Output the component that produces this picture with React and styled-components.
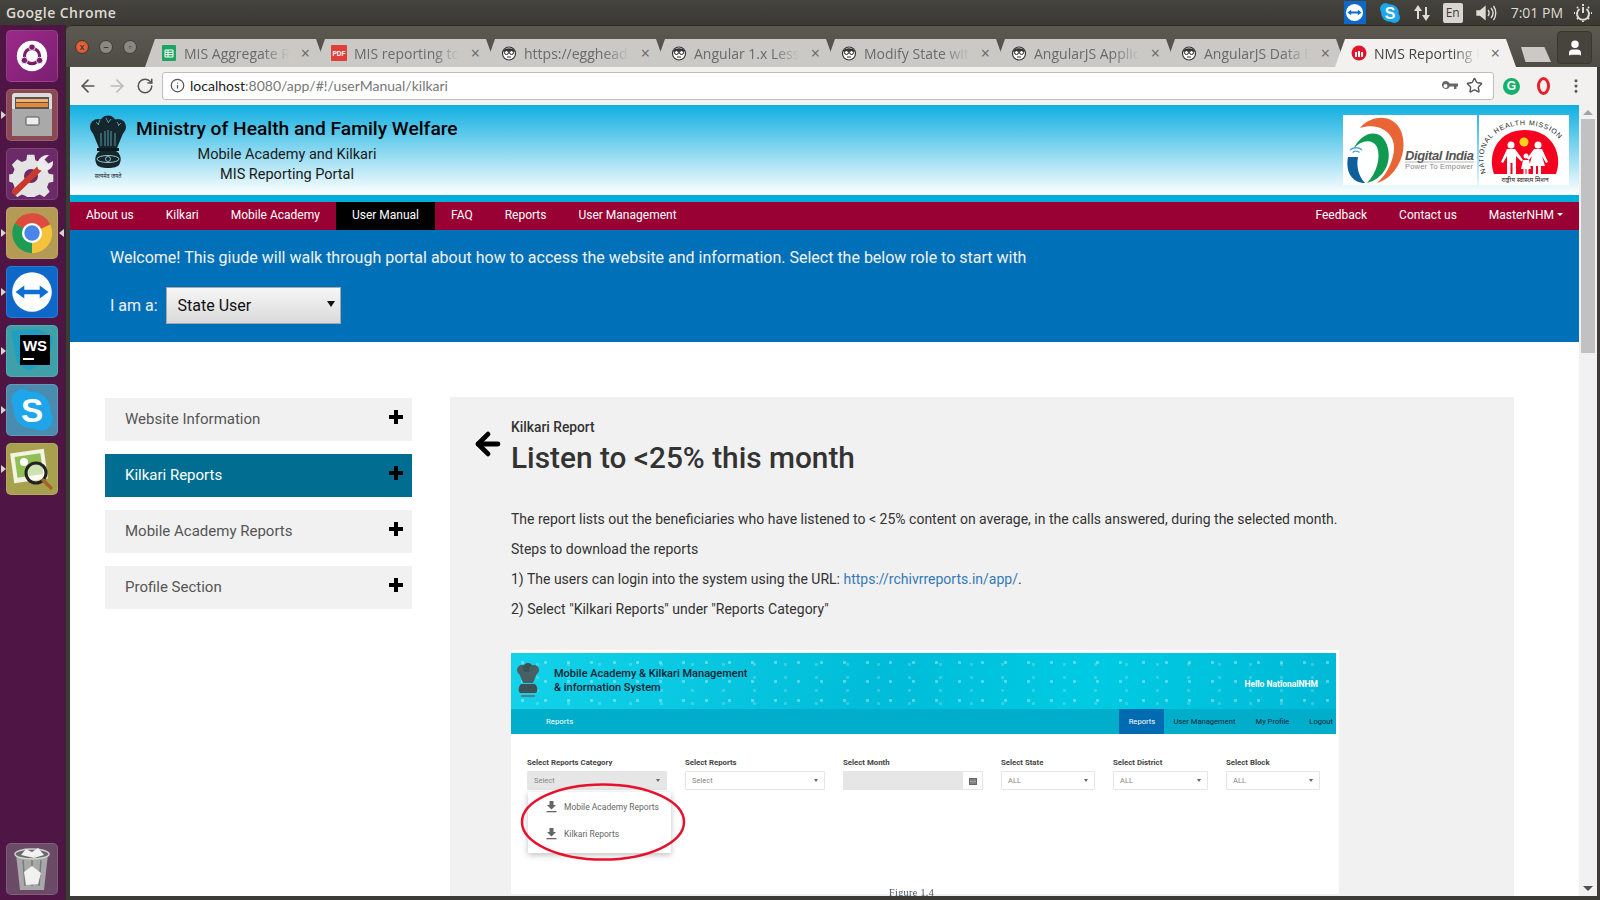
import React from 'react';
import styled, { createGlobalStyle } from 'styled-components';
import { ArrowLeft, ArrowRight, RotateCw, Info, Star, EllipsisVertical, User } from 'lucide-react';

const GlobalStyle = createGlobalStyle`
  html, body { margin: 0; height: 100%; overflow: hidden; }
  body { font-family: "Roboto", "Liberation Sans", sans-serif; background: #3c3b37; }
  #root { height: 100%; }
  * { box-sizing: border-box; }
`;

const Desktop = styled.div`
  width: 1600px;
  height: 900px;
  display: flex;
  flex-direction: column;
  overflow: hidden;
`;

const TopPanel = styled.div`
  height: 25px;
  flex: none;
  display: flex;
  align-items: center;
  justify-content: space-between;
  padding: 0 8px 0 6px;
  background: linear-gradient(#45433e, #3a3934);
  color: #dfdbd2;
  font-family: "Open Sans", sans-serif;
`;

const AppTitle = styled.div`
  font-size: 14px;
  font-weight: 600;
  letter-spacing: 0.45px;
`;

const Tray = styled.div`
  display: flex;
  align-items: center;
  gap: 13px;
  font-size: 14px;
`;

const TrayTile = styled.span`
  width: 22px;
  height: 23px;
  display: flex;
  align-items: center;
  justify-content: center;
  background: #0e68c9;
`;

const LangBadge = styled.span`
  width: 20px;
  height: 20px;
  display: flex;
  align-items: center;
  justify-content: center;
  background: #d9d6d0;
  color: #3c3b37;
  border-radius: 2px;
  font-size: 12px;
`;

const Clock = styled.span`
  margin-right: -2px;
  color: #dfdbd2;
`;

const Workspace = styled.div`
  flex: 1;
  min-height: 0;
  display: flex;
`;

const Launcher = styled.div`
  width: 66px;
  flex: none;
  padding: 5px 0 5px 6px;
  display: flex;
  flex-direction: column;
  gap: 7px;
  background: #4f1545;
  border-right: 1px solid #2d2a28;
`;

const Spacer = styled.div`
  flex: 1;
`;

const LaunchTile = styled.div`
  position: relative;
  width: 52px;
  height: 52px;
  flex: none;
  border-radius: 5px;
  background: ${(p) => p.$bg};
  border: 1px solid rgba(255, 255, 255, 0.12);
  display: flex;
  align-items: center;
  justify-content: center;
`;

const Pip = styled.span`
  position: absolute;
  left: -6px;
  top: 21px;
  border: 4px solid transparent;
  border-left: 5px solid #d8d5d0;
  border-right: 0;
`;

const RightPip = styled.span`
  position: absolute;
  right: -7px;
  top: 21px;
  border: 4px solid transparent;
  border-right: 5px solid #d8d5d0;
  border-left: 0;
`;

const ChromeWindow = styled.div`
  flex: 1;
  min-width: 0;
  display: flex;
  flex-direction: column;
  padding: 0 3px 4px 0;
  background: #3c3b37;
`;

const TabStrip = styled.div`
  height: 42px;
  flex: none;
  display: flex;
  align-items: flex-end;
  position: relative;
  margin-right: -3px;
  padding-left: 79px;
  background: linear-gradient(#5b5950, #4e4c45);
  border-top: 1px solid #2e2d29;
  border-radius: 6px 0 0 0;
`;

const WindowDots = styled.div`
  position: absolute;
  left: 9px;
  top: 14px;
  display: flex;
  gap: 10px;
`;

const Dot = styled.span`
  width: 14px;
  height: 14px;
  border-radius: 50%;
  background: ${(p) => (p.$close ? 'radial-gradient(#f0744a, #d9471f)' : '#8a8880')};
  border: 1px solid #3c3b37;
  display: flex;
  align-items: center;
  justify-content: center;
  color: #3c3b37;
  font: 700 9px/1 "Liberation Sans", sans-serif;
`;

const Tab = styled.div`
  width: 181px;
  height: 28px;
  margin-right: -11px;
  flex: none;
  display: flex;
  align-items: center;
  gap: 7px;
  padding: 0 16px;
  background: ${(p) => (p.$active ? '#f2f1f0' : '#cbc9c6')};
  clip-path: polygon(10px 0, calc(100% - 10px) 0, 100% 100%, 0 100%);
  position: relative;
  z-index: ${(p) => (p.$active ? 2 : 1)};
  font-family: "Open Sans", sans-serif;
  font-size: 14px;
  color: ${(p) => (p.$active ? '#444' : '#6a6a6a')};
`;

const TabLabel = styled.span`
  flex: 1;
  min-width: 0;
  overflow: hidden;
  white-space: nowrap;
  mask-image: linear-gradient(to right, #000 72%, transparent 96%);
`;

const TabClose = styled.span`
  color: #666;
  font-size: 16px;
  line-height: 1;
`;

const NewTab = styled.div`
  width: 30px;
  height: 15px;
  margin: 0 0 5px 16px;
  background: #cbc9c6;
  clip-path: polygon(0 0, 78% 0, 100% 100%, 15% 100%);
`;

const ProfileButton = styled.div`
  position: absolute;
  left: 1491px;
  top: 5px;
  width: 35px;
  height: 33px;
  display: flex;
  align-items: center;
  justify-content: center;
  border: 1px solid #38372f;
  border-radius: 4px;
  background: #46443d;
  color: #fff;
`;

const WindowBody = styled.div`
  flex: 1;
  min-height: 0;
  display: flex;
  flex-direction: column;
  margin-left: 4px;
`;

const Toolbar = styled.div`
  height: 38px;
  flex: none;
  display: flex;
  align-items: center;
  padding: 0 0 0 8px;
  background: #f2f1f0;
  color: #555;
`;

const NavIcons = styled.div`
  width: 84px;
  display: flex;
  gap: 9px;
  align-items: center;
`;

const AddressBar = styled.div`
  width: 1332px;
  height: 28px;
  display: flex;
  align-items: center;
  gap: 5px;
  padding: 0 10px 1px 7px;
  background: #fff;
  border: 1px solid #bdbdbd;
  border-radius: 3px;
  font-family: "Lato", sans-serif;
  font-size: 14px;
  color: #777;
`;

const Host = styled.span`
  color: #222;
`;

const Url = styled.span`
  flex: 1;
`;

const AddressIcons = styled.span`
  display: flex;
  align-items: center;
  gap: 8px;
`;

const Extensions = styled.div`
  display: flex;
  align-items: center;
  gap: 17px;
  padding-left: 9px;
`;

const ExtBadge = styled.span`
  width: 17px;
  height: 17px;
  border-radius: 50%;
  display: flex;
  align-items: center;
  justify-content: center;
  background: #15b06c;
  color: #fff;
  font: 700 12px/1 "Liberation Sans", sans-serif;
`;

const ExtRing = styled.span`
  width: 13px;
  height: 18px;
  border-radius: 50%;
  border: 3px solid #e8202a;
`;

const Viewport = styled.div`
  flex: 1;
  min-height: 0;
  display: flex;
`;

const Page = styled.div`
  width: 1509px;
  flex: none;
  overflow: hidden;
  background: #fff;
  font-family: "Roboto", sans-serif;
`;

const Scrollbar = styled.div`
  flex: 1;
  display: flex;
  flex-direction: column;
  align-items: center;
  padding: 0 2px;
  background: #f1f1f1;
`;

const ScrollUp = styled.span`
  margin: 5px 0 4px;
  border: 5px solid transparent;
  border-bottom: 5px solid #a3a3a3;
  border-top: 0;
`;

const ScrollThumb = styled.div`
  width: 100%;
  height: 234px;
  background: #c1c1c1;
`;

const ScrollDown = styled.span`
  margin-top: auto;
  margin-bottom: 5px;
  border: 5px solid transparent;
  border-top: 5px solid #505050;
  border-bottom: 0;
`;

const Header = styled.header`
  height: 90px;
  display: flex;
  justify-content: space-between;
  padding: 10px 10px 0 19px;
  background: linear-gradient(#0fafe1, #ffffff);
`;

const Brand = styled.div`
  display: flex;
  gap: 9px;
`;

const BrandText = styled.div`
  width: 322px;
  text-align: center;
  color: #1a1a1a;
`;

const Ministry = styled.h1`
  margin: 2px 0 4px;
  font-size: 19.2px;
  line-height: 24px;
  font-weight: 500;
  color: #000;
  white-space: nowrap;
  text-align: left;
`;

const PortalLine = styled.div`
  font-size: 14.5px;
  line-height: 20px;
  padding-right: 20px;
`;

const Logos = styled.div`
  display: flex;
  gap: 2px;
  height: 70px;
`;

const LogoBox = styled.div`
  width: ${(p) => p.$w}px;
  background: #fff;
`;

const Band = styled.div`
  height: 7px;
  background: #00aedb;
`;

const NavBar = styled.nav`
  height: 28px;
  display: flex;
  justify-content: space-between;
  background: #990033;
  font-size: 12px;
  color: #fff;
`;

const NavGroup = styled.div`
  display: flex;
`;

const NavItem = styled.a`
  display: flex;
  align-items: center;
  gap: 3px;
  padding: 0 16px 3px;
  background: ${(p) => (p.$active ? '#000' : 'transparent')};
`;

const Caret = styled.span`
  border: 3px solid transparent;
  border-top: 3px solid #fff;
  border-bottom: 0;
`;

const Hero = styled.section`
  height: 112px;
  padding: 18px 40px 0;
  background: #0071b9;
  color: #f2f2f2;
  font-size: 16px;
`;

const Welcome = styled.div`
  line-height: 20px;
`;

const RoleRow = styled.div`
  margin-top: 19px;
  display: flex;
  align-items: center;
  gap: 8px;
`;

const RoleSelect = styled.div`
  position: relative;
  width: 175px;
  height: 37px;
  display: flex;
  align-items: center;
  padding-left: 11px;
  background: linear-gradient(#f6f6f6, #dadada);
  border: 1px solid #a8a8a8;
  color: #111;
`;

const SelectArrow = styled.span`
  position: absolute;
  right: 5px;
  top: 13px;
  border: 4px solid transparent;
  border-top: 6px solid #111;
  border-bottom: 0;
`;

const Content = styled.main`
  display: flex;
  gap: 38px;
  padding: 55px 0 0 35px;
`;

const Sidebar = styled.aside`
  width: 307px;
  flex: none;
  margin-top: 1px;
  display: flex;
  flex-direction: column;
  gap: 13px;
`;

const SideItem = styled.div`
  height: 43px;
  display: flex;
  align-items: center;
  justify-content: space-between;
  padding: 0 8px 2px 20px;
  background: ${(p) => (p.$active ? '#006d91' : '#f1f1f1')};
  color: ${(p) => (p.$active ? '#fff' : '#555')};
  font-size: 15px;
`;

const Plus = styled.svg`
  width: 14px;
  height: 14px;
  margin: -3px 1px 0 0;
  fill: #000;
`;

const Panel = styled.section`
  width: 1064px;
  height: 520px;
  flex: none;
  padding: 20px 0 0 23px;
  background: #f1f1f1;
`;

const TitleRow = styled.div`
  display: flex;
  gap: 6px;
  align-items: flex-start;
`;

const BackArrow = styled(ArrowLeft)`
  width: 34px;
  height: 38px;
  margin-top: 8px;
  margin-left: -2px;
  color: #000;
  stroke-width: 3.4;
  flex: none;
`;

const ReportKicker = styled.div`
  font-size: 13.8px;
  font-weight: 500;
  line-height: 20px;
  color: #333;
`;

const ReportTitle = styled.h2`
  margin: 0;
  font-size: 29.8px;
  line-height: 41px;
  font-weight: 500;
  color: #333;
`;

const Article = styled.div`
  padding: 26px 0 0 38px;
  width: 866px;
  font-size: 14px;
  line-height: 30px;
  color: #333;
`;

const Para = styled.div`
  white-space: nowrap;
`;

const Link = styled.a`
  color: #337ab7;
`;

const Shot = styled.div`
  position: relative;
  width: 828px;
  height: 244px;
  margin-top: 26px;
  padding: 3px 3px 0 0;
  background: #fff;
  filter: blur(0.45px);
`;

const ShotHeader = styled.div`
  height: 56px;
  display: flex;
  align-items: center;
  justify-content: space-between;
  padding: 0 18px 0 5px;
  color: #123;
  background-color: #00c3de;
  background-image:
    radial-gradient(circle, rgba(255, 255, 255, 0.34) 1.3px, transparent 2px),
    radial-gradient(circle, rgba(255, 255, 255, 0.2) 1.3px, transparent 2px),
    linear-gradient(100deg, #12d3ea, #00bcd8 45%, #00cbe3 70%, #00b9d6);
  background-size: 23px 19px, 31px 13px, 100% 100%;
  background-position: 0 0, 11px 5px, 0 0;
`;

const ShotBrand = styled.div`
  display: flex;
  align-items: center;
  gap: 14px;
  font-size: 11px;
  line-height: 14px;
  font-weight: 500;
`;

const ShotHello = styled.div`
  color: #fff;
  font-size: 8.5px;
  font-weight: 700;
  margin: 5px 0 0 -4px;
`;

const ShotNav = styled.div`
  height: 25px;
  display: flex;
  align-items: center;
  justify-content: space-between;
  padding: 0 3px 0 35px;
  background: #00aecb;
  font-size: 7.8px;
  color: #fff;
`;

const ShotNavRight = styled.div`
  display: flex;
  align-items: center;
  height: 100%;
  gap: 20px;
  color: #123;
  font-size: 7.6px;
`;

const ShotNavActive = styled.span`
  height: 100%;
  width: 45px;
  margin-right: -11px;
  display: flex;
  align-items: center;
  justify-content: center;
  background: #006bb0;
  color: #fff;
`;

const ShotFilters = styled.div`
  display: grid;
  grid-template-columns: 140px 140px 140px 94px 95px 94px;
  column-gap: 18px;
  padding: 23px 0 0 16px;
`;

const FilterLabel = styled.div`
  font-size: 7.8px;
  line-height: 12px;
  font-weight: 700;
  color: #444;
`;

const FilterBox = styled.div`
  height: 19px;
  margin-top: 2px;
  display: flex;
  align-items: center;
  justify-content: space-between;
  padding: 0 6px;
  border: 1px solid #e6e6e6;
  border-radius: 1px;
  background: ${(p) => (p.$filled ? '#e6e6e6' : '#fff')};
  font-size: 7.5px;
  color: #888;
`;

const MiniCaret = styled.span`
  border: 2.5px solid transparent;
  border-top: 3px solid #666;
  border-bottom: 0;
`;

const MonthField = styled.div`
  display: flex;
  height: 19px;
  margin-top: 2px;
  border: 1px solid #e6e6e6;
`;

const MonthFill = styled.div`
  flex: 1;
  background: #e6e6e6;
`;

const MonthIcon = styled.div`
  width: 19px;
  display: flex;
  align-items: center;
  justify-content: center;
`;

const ShotMenu = styled.div`
  position: absolute;
  left: 17px;
  top: 142px;
  width: 143px;
  height: 61px;
  padding: 1px 0 0 18px;
  background: #fff;
  box-shadow: 0 2px 6px rgba(0, 0, 0, 0.25);
  font-size: 8.5px;
  color: #666;
`;

const ShotMenuItem = styled.div`
  height: 27px;
  display: flex;
  align-items: center;
  gap: 7px;
`;

const RedCircle = styled.svg`
  position: absolute;
  left: 8px;
  top: 132px;
  width: 166px;
  height: 80px;
  overflow: visible;
`;

const FigureCaption = styled.div`
  position: absolute;
  left: 378px;
  top: 237px;
  font-family: "Liberation Serif", serif;
  font-size: 10px;
  letter-spacing: 0.4px;
  line-height: 12px;
  color: #456;
`;

const tabs = [
  { kind: 'sheet', label: 'MIS Aggregate Reports' },
  { kind: 'pdf', label: 'MIS reporting tool' },
  { kind: 'egg', label: 'https://egghead.io/' },
  { kind: 'egg', label: 'Angular 1.x Lessons' },
  { kind: 'egg', label: 'Modify State with' },
  { kind: 'egg', label: 'AngularJS Application' },
  { kind: 'egg', label: 'AngularJS Data Binding' },
  { kind: 'nms', label: 'NMS Reporting Portal', active: true },
];

const TabIcon = ({ kind }) => {
  if (kind === 'sheet') {
    return (
      <svg width="16" height="16" viewBox="0 0 16 16">
        <rect x="1" width="14" height="16" rx="1" fill="#1fa463" />
        <path d="M4 5h8v7H4zM4 7.3h8M4 9.7h8M7 5v7" fill="none" stroke="#fff" strokeWidth="1" />
      </svg>
    );
  }
  if (kind === 'pdf') {
    return (
      <svg width="16" height="16" viewBox="0 0 16 16">
        <rect width="16" height="16" rx="1" fill="#e0403a" />
        <text x="8" y="11" textAnchor="middle" fontSize="6.5" fontWeight="700" fill="#fff" fontFamily="Liberation Sans">PDF</text>
      </svg>
    );
  }
  if (kind === 'nms') {
    return (
      <svg width="16" height="16" viewBox="0 0 16 16">
        <circle cx="8" cy="8" r="7.5" fill="#e3132a" />
        <path d="M5 12V7M8 12V6M11 12V7" stroke="#fff" strokeWidth="2" />
      </svg>
    );
  }
  return (
    <svg width="16" height="16" viewBox="0 0 16 16">
      <circle cx="8" cy="8.5" r="6.5" fill="#fff" stroke="#333" strokeWidth="1.2" />
      <path d="M2 6.5C3 2 13 2 14 6.5Z" fill="#333" />
      <circle cx="5.5" cy="7.5" r="2" fill="#fff" stroke="#222" />
      <circle cx="10.5" cy="7.5" r="2" fill="#fff" stroke="#222" />
      <path d="M6 12h4" stroke="#333" />
    </svg>
  );
};

const TeamViewerGlyph = ({ size = 19, disc = '#fff', arrow = '#0e6fd0' }) => (
  <svg width={size} height={size} viewBox="0 0 40 40">
    <circle cx="20" cy="20" r="18" fill={disc} />
    <path d="M5 20l8-6v4h14v-4l8 6-8 6v-4H13v4z" fill={arrow} />
  </svg>
);

const SkypeGlyph = ({ size = 22 }) => (
  <svg width={size} height={size} viewBox="0 0 40 40">
    <circle cx="12" cy="12" r="10" fill="#1ea5ea" />
    <circle cx="28" cy="28" r="10" fill="#1ea5ea" />
    <circle cx="20" cy="20" r="16" fill="#1ea5ea" />
    <text x="20" y="30" textAnchor="middle" fontSize="29" fontWeight="700" fill="#fff" fontFamily="Liberation Sans">S</text>
  </svg>
);

const UbuntuIcon = () => (
  <svg width="32" height="32" viewBox="0 0 40 40">
    <circle cx="20" cy="20" r="19" fill="#fff" />
    <circle cx="20" cy="20" r="9.500" fill="none" stroke="#7a1f6c" strokeWidth="4" />
    <circle cx="20" cy="9" r="4" fill="#7a1f6c" stroke="#fff" />
    <circle cx="10.5" cy="25.5" r="4" fill="#7a1f6c" stroke="#fff" />
    <circle cx="29.5" cy="25.5" r="4" fill="#7a1f6c" stroke="#fff" />
  </svg>
);

const FilesIcon = () => (
  <svg width="42" height="46" viewBox="0 0 42 46">
    <path d="M1 4a3 3 0 0 1 3-3h34a3 3 0 0 1 3 3v40H1z" fill="#dcdcdc" />
    <rect x="4" y="5" width="34" height="12" fill="#555" />
    <rect x="5" y="7" width="32" height="3" fill="#f2b36e" />
    <rect x="5" y="11" width="32" height="4" fill="#e8873a" />
    <rect x="1" y="17" width="40" height="27" fill="#a9a9a9" />
    <rect x="15" y="25" width="13" height="8" rx="1" fill="#eee" stroke="#555" />
  </svg>
);

const ToolsIcon = () => (
  <svg width="46" height="46" viewBox="0 0 46 46">
    <path d="M18 2h8l1 6 5 2 5-3 6 6-3 5 2 5 5 1v8l-5 1-2 5 3 5-6 6-5-3-5 2-1 4h-8l-1-4-5-2-5 3-6-6 3-5-2-5-4-1v-8l4-1 2-5-3-5 6-6 5 3 5-2z" fill="#e4e4e4" transform="translate(2 2) scale(.9)" />
    <circle cx="22" cy="25" r="7" fill="#6d2a68" />
    <path d="M6 41L31 17" stroke="#c9392c" strokeWidth="6" strokeLinecap="round" />
    <path d="M29 18c-3-7 3-15 11-14l-6 6 3 4 7-4c1 8-7 13-15 8z" fill="#ececec" />
  </svg>
);

const ChromeIcon = () => (
  <svg width="46" height="46" viewBox="0 0 48 48">
    <path d="M24 24L6 14A21 21 0 0 1 43 15Z" fill="#dd4b3e" />
    <path d="M24 24L43 15A21 21 0 0 1 24 45Z" fill="#f5c33b" />
    <path d="M24 24L24 45A21 21 0 0 1 6 14Z" fill="#1f9c54" />
    <circle cx="24" cy="24" r="10.5" fill="#fff" />
    <circle cx="24" cy="24" r="8" fill="#4a86e8" />
  </svg>
);

const StormIcon = () => (
  <svg width="46" height="44" viewBox="0 0 46 44">
    <path d="M2 2L28 0L44 8L40 30L20 42L8 34Z" fill="#1f9fc4" />
    <rect x="11" y="6" width="30" height="30" fill="#000" />
    <text x="26" y="22" textAnchor="middle" fontSize="15" fontWeight="700" fill="#fff" fontFamily="Liberation Sans">WS</text>
    <rect x="14" y="29" width="11" height="2" fill="#fff" />
  </svg>
);

const ViewerIcon = () => (
  <svg width="46" height="46" viewBox="0 0 46 46">
    <rect x="3" y="5" width="34" height="30" fill="#f3f3e4" transform="rotate(-8 20 20)" />
    <rect x="7" y="9" width="26" height="21" fill="#8fbf55" transform="rotate(-8 20 20)" />
    <circle cx="15" cy="16" r="4" fill="#fff" />
    <circle cx="27" cy="27" r="10" fill="rgba(255,255,255,.55)" stroke="#222" strokeWidth="3" />
    <path d="M34 34l8 8" stroke="#a5652a" strokeWidth="3.5" strokeLinecap="round" />
  </svg>
);

const TrashIcon = () => (
  <svg width="40" height="46" viewBox="0 0 40 46">
    <path d="M4 8h32l-4 36H8Z" fill="#a8a8a8" />
    <path d="M11 14l2 26M20 14v26M29 14l-2 26" stroke="#7a7a7a" strokeWidth="1.5" />
    <ellipse cx="20" cy="8" rx="17" ry="5" fill="#6a6a6a" stroke="#d0d0d0" strokeWidth="1.5" />
    <path d="M9 9l5-6 6 3 6-4 6 7-10 3z" fill="#f1f1f1" />
    <path d="M12 26l8-6 9 7-3 11-12 1z" fill="#f1f1f1" />
  </svg>
);

const launcherItems = [
  { bg: 'linear-gradient(135deg,#9b2a88,#7a1f72)', icon: <UbuntuIcon /> },
  { bg: '#8a4a55', icon: <FilesIcon />, pip: true },
  { bg: '#6d2a68', icon: <ToolsIcon /> },
  { bg: '#b39a55', icon: <ChromeIcon />, pip: true, active: true },
  { bg: '#0e68c9', icon: <TeamViewerGlyph size={44} />, pip: true },
  { bg: '#3ea0a8', icon: <StormIcon />, pip: true },
  { bg: '#4a8bb0', icon: <SkypeGlyph size={46} />, pip: true },
  { bg: '#a7a04d', icon: <ViewerIcon />, pip: true },
];

const Emblem = () => (
  <svg width="38" height="66" viewBox="0 0 38 66">
    <circle cx="9" cy="12" r="8" fill="#15272c" />
    <circle cx="19" cy="9" r="8.500" fill="#15272c" />
    <circle cx="29" cy="12" r="8" fill="#15272c" />
    <path d="M3 16l7 17h18l7-17z" fill="#15272c" />
    <path d="M7 7l3 3M11 5l-2 5M17 3l2 4M22 4l-3 4M28 7l2 3M32 8l-3 3M12 18v13M16 16v15M19 15v16M22 16v15M26 18v13" stroke="#5fa5b8" strokeWidth="0.9" />
    <rect x="8" y="33" width="22" height="3" fill="#0c1a1e" />
    <path d="M11 36h16c5 3 6 9 3 14-2 2-5 3-11 3s-9-1-11-3c-3-5-2-11 3-14z" fill="#15272c" />
    <ellipse cx="19" cy="44" rx="11" ry="3.500" fill="none" stroke="#a8d3dd" strokeWidth="0.9" />
    <circle cx="19" cy="44" r="2.500" fill="none" stroke="#a8d3dd" strokeWidth="0.8" />
    <text x="19" y="63" textAnchor="middle" fontSize="5.5" fill="#222" fontFamily="Noto Sans">सत्यमेव जयते</text>
  </svg>
);

const DigitalIndiaLogo = () => (
  <svg width="134" height="70" viewBox="0 0 134 70">
    <path d="M17 13C28 0 50 -2 58 16C66 36 54 62 34 68C46 58 54 38 50 26C46 14 32 8 17 13Z" fill="#ea6535" />
    <path d="M10 35C18 16 38 12 44 30C50 48 40 64 24 68C34 58 38 42 34 32C30 24 18 24 10 35Z" fill="#109a4f" />
    <path d="M5 42H15C13 52 16 62 22 68C10 68 2 58 5 42Z" fill="#0f5f9c" />
    <path d="M7 35c3.500-3 9-3 12 0M9.500 37.500c2-1.500 5-1.500 7 0" stroke="#4fa6d6" strokeWidth="1.3" fill="none" />
    <text x="62" y="45" fontSize="13" fontWeight="700" fontStyle="italic" fill="#555" fontFamily="Liberation Sans" textLength="69">Digital India</text>
    <path d="M62 47h69" stroke="#888" strokeWidth="0.6" />
    <text x="62" y="54" fontSize="7.5" fill="#888" fontFamily="Liberation Sans" textLength="68">Power To Empower</text>
  </svg>
);

const NhmLogo = () => (
  <svg width="90" height="70" viewBox="0 0 90 70">
    <defs>
      <path id="nhmArc" d="M7 58C-3 32 16 10 46 10C76 10 95 32 85 58" />
    </defs>
    <path d="M15 59C8 40 18 15 46 15C74 15 84 40 77 59Z" fill="#f5001e" />
    <circle cx="45" cy="27" r="4.500" fill="#ffd21a" />
    <circle cx="32" cy="30" r="3.500" fill="#fff" />
    <path d="M28 34h8l8 11-1.500 1.500L37 41v18h-3.500V48h-2v11H28V41l-4 7-2-1z" fill="#fff" />
    <circle cx="59" cy="30" r="3.500" fill="#fff" />
    <path d="M55 34h8l6 13-2 1-4-7 3 10h-4v8h-3v-8h-2v8h-3v-8h-4l3-10-3 4-2-1.500z" fill="#fff" />
    <circle cx="47" cy="41" r="2.500" fill="#fff" />
    <path d="M44 45h6l2 9h-2.500v5h-2v-5h-1v5h-2v-5H42z" fill="#fff" />
    <text fontSize="7" fill="#222" fontFamily="Liberation Sans">
      <textPath href="#nhmArc" textLength="112">NATIONAL HEALTH MISSION</textPath>
    </text>
    <text x="46" y="67" textAnchor="middle" fontSize="6.5" fill="#222" fontFamily="Noto Sans">राष्ट्रीय स्वास्थ्य मिशन</text>
  </svg>
);

const ShotEmblem = () => (
  <svg width="24" height="38" viewBox="0 0 24 38">
    <circle cx="6" cy="8" r="5" fill="#4a5f63" />
    <circle cx="12" cy="6" r="5" fill="#3d5257" />
    <circle cx="18" cy="8" r="5" fill="#4a5f63" />
    <path d="M3 11l4 10h10l4-10z" fill="#4a5f63" />
    <path d="M5 22h14c3 3 3 7 1 9H4c-2-2-2-6 1-9z" fill="#3d5257" />
    <rect x="5" y="33" width="14" height="2" fill="#5c7a80" />
  </svg>
);

const FilledDownload = () => (
  <svg width="11" height="12" viewBox="0 0 11 12" fill="#666">
    <path d="M3.500 0h4v4H10L5.500 8.500 1 4h2.500z" />
    <rect x="0.500" y="10" width="10" height="1.300" />
  </svg>
);

const FilledCalendar = () => (
  <svg width="8" height="8" viewBox="0 0 8 8" fill="#666">
    <path d="M0 1h8v7H0z" />
    <path d="M1 3h6M1 4.500h6M1 6h6" stroke="#ddd" strokeWidth="0.5" />
  </svg>
);

const filterCols = [
  { label: 'Select Reports Category', value: 'Select', filled: true },
  { label: 'Select Reports', value: 'Select' },
  { label: 'Select Month', month: true },
  { label: 'Select State', value: 'ALL' },
  { label: 'Select District', value: 'ALL' },
  { label: 'Select Block', value: 'ALL' },
];

const sections = ['Website Information', 'Kilkari Reports', 'Mobile Academy Reports', 'Profile Section'];

export default function App() {
  return (
    <Desktop>
      <GlobalStyle />
      <TopPanel>
        <AppTitle>Google Chrome</AppTitle>
        <Tray>
          <TrayTile>
            <TeamViewerGlyph />
          </TrayTile>
          <SkypeGlyph />
          <svg width="16" height="20" viewBox="0 0 16 20" fill="#dfdbd2">
            <path d="M4 2L0 8h3v8h2V8h3zM12 18l4-6h-3V4h-2v8H8z" />
          </svg>
          <LangBadge>En</LangBadge>
          <svg width="22" height="18" viewBox="0 0 22 18" fill="none" stroke="#dfdbd2" strokeWidth="1.400">
            <path d="M1 7h3l5-4v12l-5-4H1z" fill="#dfdbd2" />
            <path d="M12 6c1.500 2 1.500 4 0 6M15 4c2.500 3 2.500 7 0 10M17.500 2c3 4 3 10 0 14" />
          </svg>
          <Clock>7:01 PM</Clock>
          <svg width="18" height="18" viewBox="0 0 18 18" fill="none" stroke="#dfdbd2" strokeWidth="2">
            <path d="M9 3v6" />
            <path d="M5.500 5a6 6 0 1 0 7 0" />
            <path d="M9 0v2M1 9H0M18 9h-1M9 18v-1M3 3l1 1M15 3l-1 1M3 15l1-1M15 15l-1-1" />
          </svg>
        </Tray>
      </TopPanel>
      <Workspace>
        <Launcher>
          {launcherItems.map((item, idx) => (
            <LaunchTile key={idx} $bg={item.bg}>
              {item.pip && <Pip />}
              {item.active && <RightPip />}
              {item.icon}
            </LaunchTile>
          ))}
          <Spacer />
          <LaunchTile $bg="#6b4a68">
            <TrashIcon />
          </LaunchTile>
        </Launcher>
        <ChromeWindow>
          <TabStrip>
            <WindowDots>
              <Dot $close>x</Dot>
              <Dot>–</Dot>
              <Dot>▫</Dot>
            </WindowDots>
            {tabs.map((tab) => (
              <Tab key={tab.label} $active={tab.active}>
                <TabIcon kind={tab.kind} />
                <TabLabel>{tab.label}</TabLabel>
                <TabClose>×</TabClose>
              </Tab>
            ))}
            <NewTab />
            <ProfileButton>
              <User size={18} fill="#fff" />
            </ProfileButton>
          </TabStrip>
          <WindowBody>
            <Toolbar>
              <NavIcons>
                <ArrowLeft size={20} />
                <ArrowRight size={20} color="#bbb" />
                <RotateCw size={18} />
              </NavIcons>
              <AddressBar>
                <Info size={15} color="#555" />
                <Url>
                  <Host>localhost</Host>:8080/app/#!/userManual/kilkari
                </Url>
                <AddressIcons>
                  <svg width="16" height="10" viewBox="0 0 16 10" fill="#666">
                    <path d="M4 0a4 4 0 0 1 3.700 2.500H16v3h-1.500V8h-2.500V5.500H7.700A4 4 0 1 1 4 0zM3.500 3a2 2 0 1 0 0 4 2 2 0 0 0 0-4z" />
                  </svg>
                  <Star size={17} color="#555" />
                </AddressIcons>
              </AddressBar>
              <Extensions>
                <ExtBadge>G</ExtBadge>
                <ExtRing />
                <EllipsisVertical size={18} color="#555" />
              </Extensions>
            </Toolbar>
            <Viewport>
              <Page>
                <Header>
                  <Brand>
                    <Emblem />
                    <BrandText>
                      <Ministry>Ministry of Health and Family Welfare</Ministry>
                      <PortalLine>Mobile Academy and Kilkari</PortalLine>
                      <PortalLine>MIS Reporting Portal</PortalLine>
                    </BrandText>
                  </Brand>
                  <Logos>
                    <LogoBox $w={134}>
                      <DigitalIndiaLogo />
                    </LogoBox>
                    <LogoBox $w={90}>
                      <NhmLogo />
                    </LogoBox>
                  </Logos>
                </Header>
                <Band />
                <NavBar>
                  <NavGroup>
                    <NavItem>About us</NavItem>
                    <NavItem>Kilkari</NavItem>
                    <NavItem>Mobile Academy</NavItem>
                    <NavItem $active>User Manual</NavItem>
                    <NavItem>FAQ</NavItem>
                    <NavItem>Reports</NavItem>
                    <NavItem>User Management</NavItem>
                  </NavGroup>
                  <NavGroup>
                    <NavItem>Feedback</NavItem>
                    <NavItem>Contact us</NavItem>
                    <NavItem>
                      MasterNHM
                      <Caret />
                    </NavItem>
                  </NavGroup>
                </NavBar>
                <Hero>
                  <Welcome>
                    Welcome! This giude will walk through portal about how to access the website and information. Select the below role to start with
                  </Welcome>
                  <RoleRow>
                    I am a:
                    <RoleSelect>
                      State User
                      <SelectArrow />
                    </RoleSelect>
                  </RoleRow>
                </Hero>
                <Content>
                  <Sidebar>
                    {sections.map((name) => (
                      <SideItem key={name} $active={name === 'Kilkari Reports'}>
                        {name}
                        <Plus viewBox="0 0 14 14">
                          <path d="M5 0h4v5h5v4H9v5H5V9H0V5h5z" />
                        </Plus>
                      </SideItem>
                    ))}
                  </Sidebar>
                  <Panel>
                    <TitleRow>
                      <BackArrow />
                      <div>
                        <ReportKicker>Kilkari Report</ReportKicker>
                        <ReportTitle>Listen to &lt;25% this month</ReportTitle>
                      </div>
                    </TitleRow>
                    <Article>
                      <Para>The report lists out the beneficiaries who have listened to &lt; 25% content on average, in the calls answered, during the selected month.</Para>
                      <Para>Steps to download the reports</Para>
                      <Para>
                        1) The users can login into the system using the URL: <Link>https://rchivrreports.in/app/</Link>.
                      </Para>
                      <Para>2) Select "Kilkari Reports" under "Reports Category"</Para>
                      <Shot>
                        <ShotHeader>
                          <ShotBrand>
                            <ShotEmblem />
                            <div>
                              Mobile Academy &amp; Kilkari Management
                              <br />
                              &amp; information System
                            </div>
                          </ShotBrand>
                          <ShotHello>Hello NationalNHM</ShotHello>
                        </ShotHeader>
                        <ShotNav>
                          <span>Reports</span>
                          <ShotNavRight>
                            <ShotNavActive>Reports</ShotNavActive>
                            <span>User Management</span>
                            <span>My Profile</span>
                            <span>Logout</span>
                          </ShotNavRight>
                        </ShotNav>
                        <ShotFilters>
                          {filterCols.map((col) => (
                            <div key={col.label}>
                              <FilterLabel>{col.label}</FilterLabel>
                              {col.month ? (
                                <MonthField>
                                  <MonthFill />
                                  <MonthIcon>
                                    <FilledCalendar />
                                  </MonthIcon>
                                </MonthField>
                              ) : (
                                <FilterBox $filled={col.filled}>
                                  {col.value}
                                  <MiniCaret />
                                </FilterBox>
                              )}
                            </div>
                          ))}
                        </ShotFilters>
                        <ShotMenu>
                          <ShotMenuItem>
                            <FilledDownload />
                            Mobile Academy Reports
                          </ShotMenuItem>
                          <ShotMenuItem>
                            <FilledDownload />
                            Kilkari Reports
                          </ShotMenuItem>
                        </ShotMenu>
                        <RedCircle viewBox="0 0 166 80">
                          <ellipse cx="84" cy="40" rx="81" ry="37.500" fill="none" stroke="#e8112d" strokeWidth="2.500" />
                        </RedCircle>
                        <FigureCaption>Figure 1.4</FigureCaption>
                      </Shot>
                    </Article>
                  </Panel>
                </Content>
              </Page>
              <Scrollbar>
                <ScrollUp />
                <ScrollThumb />
                <ScrollDown />
              </Scrollbar>
            </Viewport>
          </WindowBody>
        </ChromeWindow>
      </Workspace>
    </Desktop>
  );
}
